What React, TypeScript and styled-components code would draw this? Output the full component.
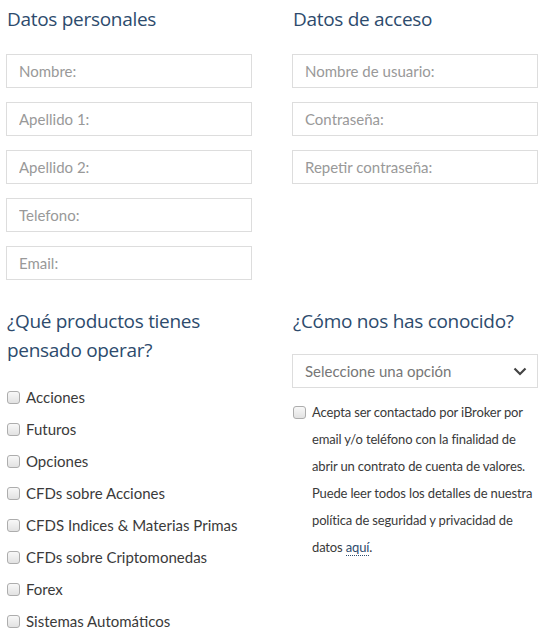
import React from 'react';
import styled, { createGlobalStyle } from 'styled-components';

const GlobalStyle = createGlobalStyle`
	body {
		margin: 0;
		background: #fff;
		font-family: Lato, "Liberation Sans", sans-serif;
	}
`;

const Page = styled.div`
	display: grid;
	grid-template-columns: 246px 246px;
	column-gap: 40px;
	row-gap: 13px;
	padding: 5px 0 0 6px;
`;

const Section = styled.section`
	display: flex;
	flex-direction: column;
`;

const Heading = styled.h2<{ $gap: number }>`
	margin: 0 0 ${(p) => p.$gap}px 1px;
	font-family: "Open Sans", "Noto Sans", sans-serif;
	font-weight: 400;
	font-size: 19px;
	line-height: 29px;
	letter-spacing: -0.3px;
	color: #2d4b6d;
`;

const Input = styled.input`
	box-sizing: border-box;
	width: 100%;
	height: 34px;
	margin-bottom: 14px;
	padding: 0 12px;
	border: 1px solid #ddd;
	outline: none;
	font: inherit;
	font-size: 15px;
	color: #555;
	background: #fff;
	&::placeholder {
		color: #999;
	}
`;

const SelectBox = styled.div`
	box-sizing: border-box;
	display: flex;
	align-items: center;
	justify-content: space-between;
	height: 34px;
	padding: 0 10px 0 12px;
	border: 1px solid #ddd;
	font-size: 15px;
	color: #777;
`;

const CheckList = styled.ul`
	list-style: none;
	margin: 16px 0 0;
	padding: 0;
`;

const CheckRow = styled.li`
	display: flex;
	align-items: center;
	height: 32px;
	font-size: 15px;
	color: #3a3a3a;
`;

const Box = styled.input.attrs({ type: 'checkbox' })`
	appearance: none;
	flex: none;
	width: 13px;
	height: 13px;
	margin: 0 6px 0 1px;
	border: 1px solid #adadad;
	border-radius: 3px;
	background: linear-gradient(#f8f8f8, #e2e2e2);
`;

const Consent = styled.div`
	display: flex;
	align-items: flex-start;
	margin: 11px -6px 0 0;
	font-size: 13px;
	line-height: 27px;
	letter-spacing: -0.15px;
	color: #3a3a3a;
`;

const ConsentBox = styled(Box)`
	margin: 7px 6px 0 1px;
`;

const Link = styled.a`
	color: #2d4b6d;
	text-decoration: none;
	border-bottom: 1px dotted #2d4b6d;
`;

const nameFields = ['Nombre:', 'Apellido 1:', 'Apellido 2:', 'Telefono:', 'Email:'];
const accessFields = ['Nombre de usuario:', 'Contraseña:', 'Repetir contraseña:'];
const products = [
	'Acciones',
	'Futuros',
	'Opciones',
	'CFDs sobre Acciones',
	'CFDS Indices & Materias Primas',
	'CFDs sobre Criptomonedas',
	'Forex',
	'Sistemas Automáticos',
];

const App = () => {
	return (
		<>
			<GlobalStyle />
			<Page>
				<Section>
					<Heading $gap={20}>Datos personales</Heading>
					{nameFields.map((f) => (
						<Input key={f} placeholder={f} />
					))}
				</Section>
				<Section>
					<Heading $gap={20}>Datos de acceso</Heading>
					{accessFields.map((f) => (
						<Input key={f} placeholder={f} type={f === 'Nombre de usuario:' ? 'text' : 'password'} />
					))}
				</Section>
				<Section>
					<Heading $gap={0}>
						¿Qué productos tienes
						<br />
						pensado operar?
					</Heading>
					<CheckList>
						{products.map((p) => (
							<CheckRow key={p}>
								<Box />
								{p}
							</CheckRow>
						))}
					</CheckList>
				</Section>
				<Section>
					<Heading $gap={18}>¿Cómo nos has conocido?</Heading>
					<SelectBox>
						Seleccione una opción
						<svg width="14" height="9" viewBox="0 0 14 9">
							<path d="M1.5 1.5 L7 7 L12.5 1.5" fill="none" stroke="#444" strokeWidth="2.2" />
						</svg>
					</SelectBox>
					<Consent>
						<ConsentBox />
						<span>
							Acepta ser contactado por iBroker por
							<br />
							email y/o teléfono con la finalidad de
							<br />
							abrir un contrato de cuenta de valores.
							<br />
							Puede leer todos los detalles de nuestra
							<br />
							política de seguridad y privacidad de
							<br />
							datos <Link href="#">aquí</Link>.
						</span>
					</Consent>
				</Section>
			</Page>
		</>
	);
};

export default App;
